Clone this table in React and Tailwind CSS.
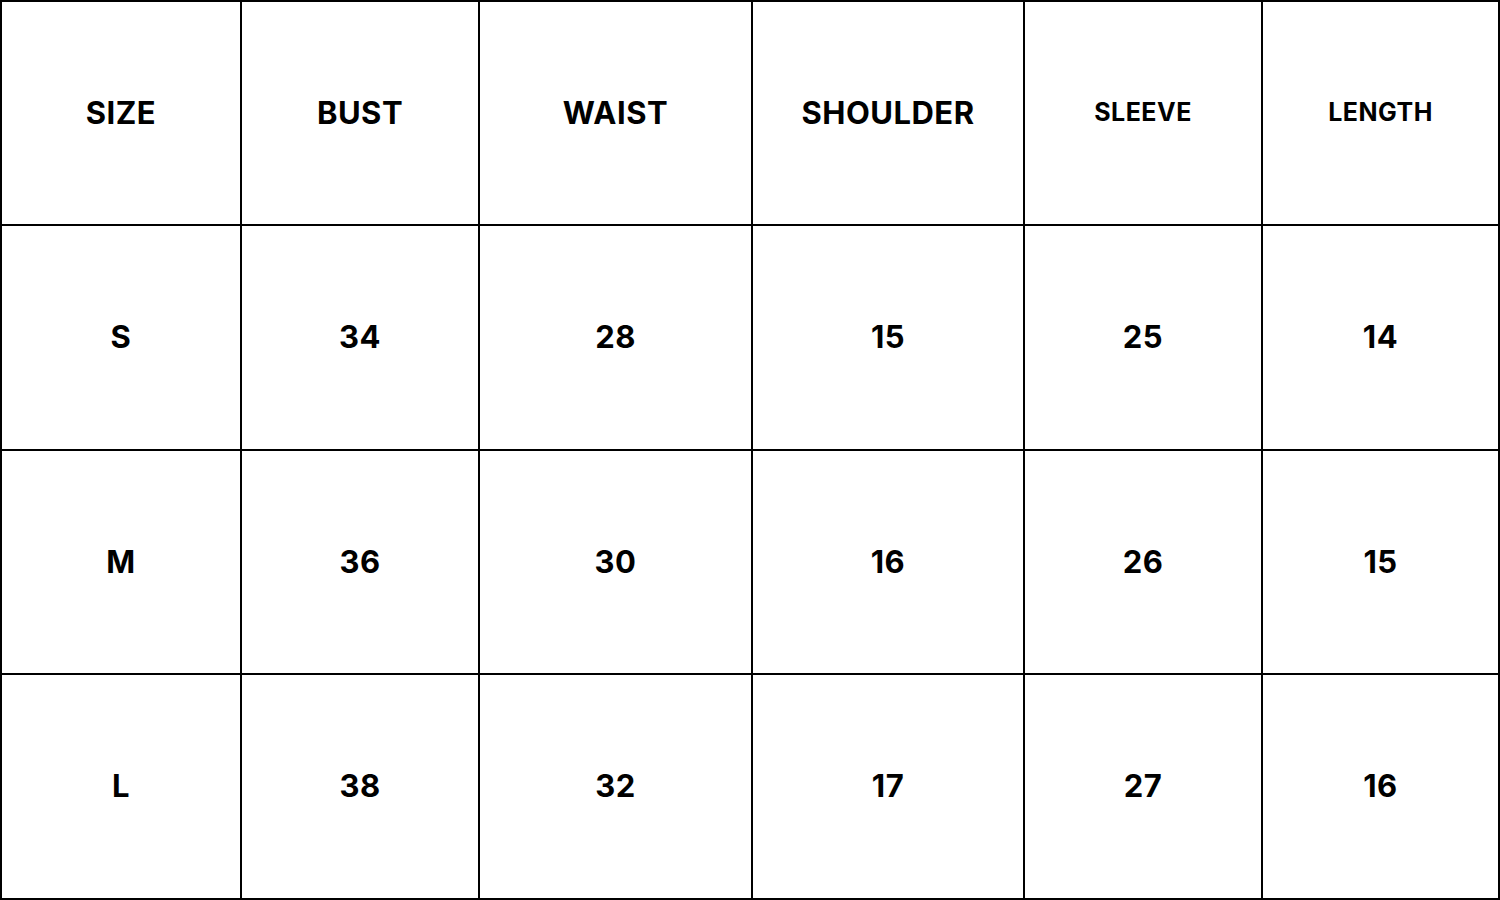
import React from 'react';

const headers = [
    {label: 'SIZE', small: false},
    {label: 'BUST', small: false},
    {label: 'WAIST', small: false},
    {label: 'SHOULDER', small: false},
    {label: 'SLEEVE', small: true},
    {label: 'LENGTH', small: true},
];

const rows = [
    ['S', '34', '28', '15', '25', '14'],
    ['M', '36', '30', '16', '26', '15'],
    ['L', '38', '32', '17', '27', '16'],
];

function Cell({children, small = false}) {
    return (
        <div className="flex items-center justify-center border-r-2 border-b-2 border-black">
            <span className={small ? 'text-[25px] font-bold tracking-[0.5px]' : 'text-[31px] font-bold tracking-[0.5px]'}>
                {children}
            </span>
        </div>
    );
}

export default function App() {
    return (
        <div className="w-[1500px] h-[900px] bg-white text-black font-['Inter',sans-serif]">
            <div className="grid h-full grid-cols-[240px_238px_273px_272px_238px_237px] grid-rows-[224px_225px_224px_225px] border-l-2 border-t-2 border-black box-content w-[1498px] h-[898px]">
                {headers.map(h => (
                    <Cell key={h.label} small={h.small}>{h.label}</Cell>
                ))}
                {rows.map((row, i) =>
                    row.map((val, j) => <Cell key={i + '-' + j}>{val}</Cell>)
                )}
            </div>
        </div>
    );
}
